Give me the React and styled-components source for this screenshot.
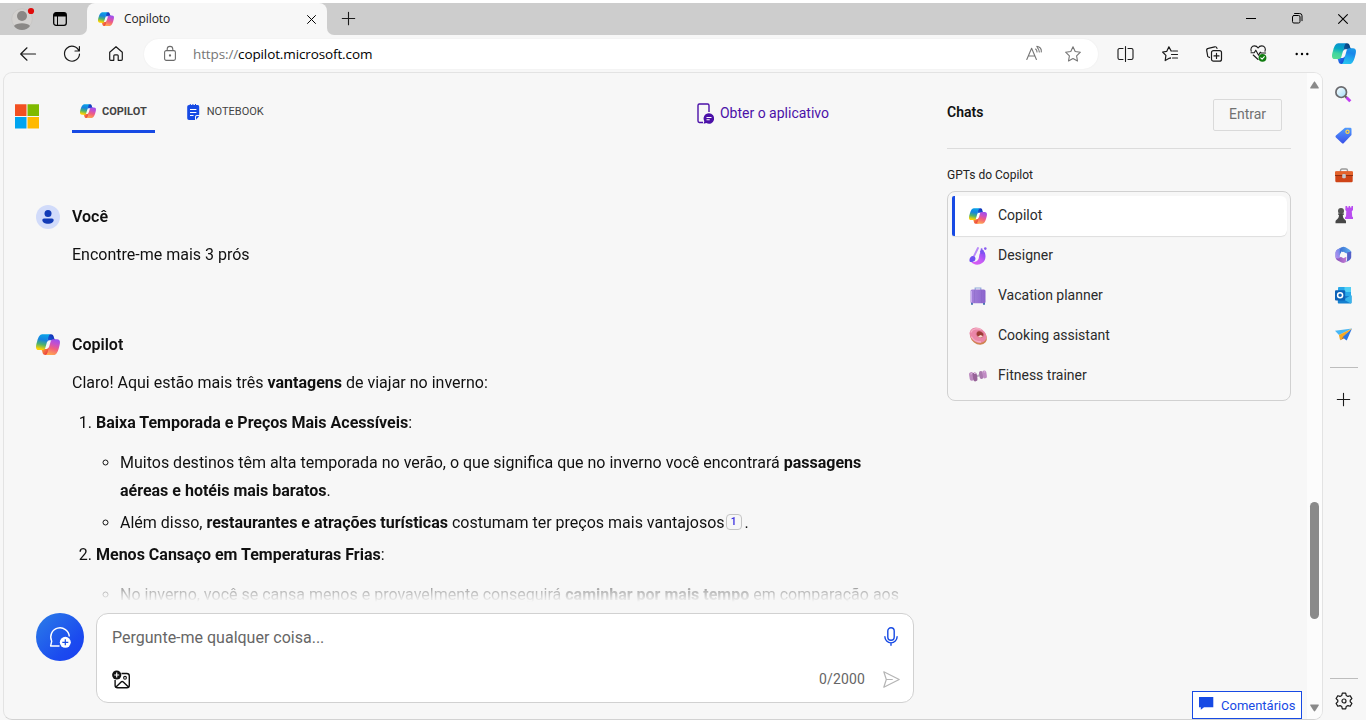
import React, { useId } from "react";
import styled, { createGlobalStyle, css } from "styled-components";

const GlobalStyle = createGlobalStyle`
  *, *::before, *::after { box-sizing: border-box; }
  body { margin: 0; background: #f7f7f7; color: #111; font-family: Roboto, "Liberation Sans", sans-serif; overflow: hidden; }
  button { font: inherit; margin: 0; padding: 0; border: 0; background: none; color: inherit; }
  svg { display: block; flex: none; overflow: visible; }
`;

/* ---------- icons ---------- */

const Line = ({ w = 20, h, box, stroke = "#1b1b1b", sw = 1, children }) => (
  <svg width={w} height={h || w} viewBox={box || `0 0 ${w} ${h || w}`} fill="none" stroke={stroke} strokeWidth={sw} strokeLinecap="round" strokeLinejoin="round">
    {children}
  </svg>
);

const logoThemes = {
  color: {
    left: ["#0aa4e8", "#1583e0", "#4fb36c", "#ffd400"],
    right: ["#9a50f0", "#c850c8", "#f2607c", "#ffa84f"],
    top: ["#1e63e0", "#0f33b8"],
    bottom: ["#f8a13c", "#ee3f3f"],
  },
  blue: {
    left: ["#0a8fd0", "#05a8c4", "#3fd4a0", "#55dc94"],
    right: ["#1b9ae8", "#1a86ea", "#1fa6ee", "#28c4f0"],
    top: ["#0f5fa8", "#07407c"],
    bottom: ["#2c7cf0", "#1550d8"],
  },
};

function CopilotLogo({ width = 24, theme = "color" }) {
  const id = useId().replace(/[^a-zA-Z0-9]/g, "");
  const t = logoThemes[theme];
  return (
    <svg width={width} height={(width * 39) / 44} viewBox="2 4.5 44 39">
      <defs>
        <linearGradient id={`${id}l`} x1="17" y1="5" x2="11" y2="34" gradientUnits="userSpaceOnUse">
          <stop offset="0" stopColor={t.left[0]} />
          <stop offset=".35" stopColor={t.left[1]} />
          <stop offset=".65" stopColor={t.left[2]} />
          <stop offset=".95" stopColor={t.left[3]} />
        </linearGradient>
        <linearGradient id={`${id}r`} x1="38" y1="14" x2="29" y2="43" gradientUnits="userSpaceOnUse">
          <stop offset="0" stopColor={t.right[0]} />
          <stop offset=".3" stopColor={t.right[1]} />
          <stop offset=".6" stopColor={t.right[2]} />
          <stop offset="1" stopColor={t.right[3]} />
        </linearGradient>
        <linearGradient id={`${id}t`} x1="24" y1="18" x2="33" y2="7" gradientUnits="userSpaceOnUse">
          <stop offset="0" stopColor={t.top[0]} />
          <stop offset="1" stopColor={t.top[1]} />
        </linearGradient>
        <linearGradient id={`${id}b`} x1="13" y1="32" x2="22" y2="40" gradientUnits="userSpaceOnUse">
          <stop offset="0" stopColor={t.bottom[0]} />
          <stop offset="1" stopColor={t.bottom[1]} />
        </linearGradient>
      </defs>
      <path fill={`url(#${id}t)`} d="M34.142 8.325A4.63 4.63 0 0 0 29.7 5h-1.35a4.63 4.63 0 0 0-4.554 3.794L21.48 21.407l.575-1.965a4.63 4.63 0 0 1 4.443-3.33h7.853l3.294 1.282 3.175-1.283h-.926a4.63 4.63 0 0 1-4.443-3.325z" />
      <path fill={`url(#${id}b)`} d="M14.33 39.656A4.63 4.63 0 0 0 18.779 43h2.87a4.63 4.63 0 0 0 4.629-4.51l.312-12.163-.654 2.233a4.63 4.63 0 0 1-4.443 3.329h-7.919l-2.823-1.531-3.057 1.53h.912a4.63 4.63 0 0 1 4.447 3.344z" />
      <path fill={`url(#${id}l)`} d="M29.5 5H13.46c-4.583 0-7.332 6.057-9.165 12.113-2.172 7.176-5.014 16.775 3.207 16.775h6.925a4.63 4.63 0 0 0 4.463-3.358L24.494 11.126C25.443 8.2 26.4 5 29.5 5z" />
      <path fill={`url(#${id}r)`} d="M18.498 43h16.04c4.583 0 7.332-6.058 9.165-12.115 2.172-7.177 5.015-16.779-3.207-16.779H33.57a4.63 4.63 0 0 0-4.463 3.359l-5.603 19.409C22.555 39.8 21.6 43 18.498 43z" />
    </svg>
  );
}

const ProfileIcon = () => (
  <svg width="22" height="24" viewBox="0 0 22 24">
    <circle cx="11" cy="12" r="10.300" fill="#d3d1cf" stroke="#c3c1bf" strokeWidth=".6" />
    <circle cx="11" cy="9" r="5" fill="#8a8886" />
    <path d="M3 19c2-3.600 14-3.600 16 0-1.800 2.600-4.800 4-8 4s-6.200-1.400-8-4z" fill="#8a8886" />
    <circle cx="20" cy="4" r="3.100" fill="#e00b0b" />
  </svg>
);

const TabActionsIcon = () => (
  <svg width="14" height="14" viewBox="0 0 14 14">
    <rect x=".7" y=".7" width="12.600" height="12.600" rx="2.300" fill="none" stroke="#000" strokeWidth="1.300" />
    <path d="M.8 4.500V3A2.200 2.200 0 0 1 3 .8h8A2.200 2.200 0 0 1 13.200 3v1.500z" fill="#000" />
    <path d="M4.500 4v9" stroke="#000" strokeWidth="1" />
  </svg>
);

const BackIcon = () => <Line w={16} h={14} sw={1.2}><path d="M15.500 7H.8M7 .8.700 7 7 13.200" /></Line>;
const RefreshIcon = () => <Line w={16} sw={1.2}><path d="M15 5A7.500 7.500 0 1 0 15.500 8M15.400.6V5H11" /></Line>;
const HomeIcon = () => <Line w={14} h={15} sw={1.2}><path d="M.7 6.200 7 .700l6.300 5.500v7.100a1 1 0 0 1-1 1H9.200V9.800a1 1 0 0 0-1-1H5.800a1 1 0 0 0-1 1v4.500H1.700a1 1 0 0 1-1-1z" /></Line>;
const LockIcon = () => (
  <Line w={12} h={15} stroke="#6b6b6b" sw={1.1}>
    <rect x=".6" y="4.600" width="10.800" height="9.800" rx="1.600" />
    <path d="M3.200 4.500V3.200a2.800 2.800 0 0 1 5.600 0v1.300" />
    <circle cx="6" cy="9.500" r=".6" fill="#555" />
  </Line>
);
const ReadAloudIcon = () => (
  <Line w={16} h={15} stroke="#767676" sw={1.1}>
    <path d="M.8 13.500 5.600 2.200l4.800 11.300M2.300 10h6.500M9.600 3c.9.700 1.400 1.800 1.400 3M11.300 1.600c1.300 1.100 2 2.600 2 4.400M10.800.4C14 .9 15.600 3.200 15.300 6" />
  </Line>
);
const StarIcon = () => (
  <Line w={16} stroke="#767676" sw={1.1}>
    <path d="m8 .8 2.200 4.700 5.200.7-3.800 3.600.9 5.200L8 12.500 3.500 15l.9-5.200L.6 6.200l5.200-.7z" />
  </Line>
);
const SplitIcon = () => <Line w={17} h={16} sw={1.1}><path d="M7.500 .5v15M5 2.500H1.600A1.600 1.600 0 0 0 0 4.100v7.800a1.600 1.600 0 0 0 1.600 1.600H5M10 2.500h3.400A1.600 1.600 0 0 1 15 4.100v7.800a1.600 1.600 0 0 1-1.600 1.600H10" /></Line>;
const FavoritesIcon = () => (
  <Line w={16} sw={1.2}>
    <path d="M9 4.800 6.900.8 4.800 5.300.6 6l3.300 3.400-.7 5.200 4-2.300M11 5h4.500M9.500 8.500h6M10.500 12h5M9 4.800l1 .2M8.200 11.500v1" />
  </Line>
);
const CollectionsIcon = () => (
  <Line w={16} sw={1.2}>
    <rect x="5.500" y="4.600" width="10" height="10.600" rx="2" />
    <path d="M10.500 7.400v5M8 9.900h5M3.500 11.400 2.600 11A2 2 0 0 1 1.500 8.800L.7 4.600A2 2 0 0 1 2.300 2.300L8.700.8A2 2 0 0 1 11 2.300" />
  </Line>
);
const EssentialsIcon = () => (
  <Line w={17} h={17} sw={1.1}>
    <path d="M1.200 6.200C.2 3.500 1.800.9 4.400.9c1.700 0 2.900.8 3.700 2.100C8.900 1.700 10.100.9 11.800.9c2.700 0 4.300 2.600 3.200 5.300M1 7.800h3.200l1.600-2.600 2.800 5 1.600-3 1 .8h4.400M3.200 10l4.900 4.500" />
    <circle cx="12.500" cy="12.800" r="3.900" fill="#107c10" stroke="none" />
    <path d="m10.800 12.900 1.300 1.200 2.200-2.400" stroke="#fff" />
  </Line>
);
const MoreIcon = () => <svg width="14" height="4" viewBox="0 0 14 4"><circle cx="1.700" cy="2" r="1.200" /><circle cx="7" cy="2" r="1.200" /><circle cx="12.300" cy="2" r="1.200" /></svg>;
const CrossIcon = ({ size = 10 }) => <Line w={size} box="0 0 10 10" stroke="#000" sw={1.1}><path d="m.6.600 8.800 8.800M9.400.600.600 9.400" /></Line>;
const PlusIcon = ({ size = 13 }) => <Line w={size} box="0 0 13 13" sw={1.1}><path d="M6.500 .3v12.400M.3 6.500h12.400" /></Line>;
const MinimizeIcon = () => <svg width="10" height="1"><path d="M0 .500h10" stroke="#000" /></svg>;
const RestoreIcon = () => (
  <Line w={11} stroke="#000" sw={1}>
    <rect x=".5" y="2.500" width="7.500" height="7.500" rx="1.400" />
    <path d="M2.600.500H7.700a2.300 2.300 0 0 1 2.300 2.300v4.900" />
  </Line>
);

const MicrosoftLogo = () => (
  <svg width="24" height="25" viewBox="0 0 24 25">
    <path fill="#f25022" d="M0 .300h11.500v11.700H0z" /><path fill="#7fba00" d="M12.500 .300H24v11.700H12.500z" />
    <path fill="#00a4ef" d="M0 13h11.500v11.500H0z" /><path fill="#ffb900" d="M12.500 13H24v11.500H12.500z" />
  </svg>
);

const NotebookIcon = () => (
  <svg width="13" height="16" viewBox="0 0 13 16">
    <path fill="#174ae4" d="M2 1h.8V0h1v1h1.600V0h1v1H8V0h1v1h1.300A1.700 1.700 0 0 1 12.200 2.800V11H9.700A1.700 1.700 0 0 0 8 12.700V16H2A1.800 1.800 0 0 1 .2 14.200V2.800A1.800 1.800 0 0 1 2 1z" />
    <path fill="#174ae4" d="M9 15.800V13a1 1 0 0 1 1-1h2.200z" />
    <path d="M3 5.500h6.400M3 8.500h6.400M3 11.500h3.500" stroke="#fff" />
  </svg>
);

const PhoneChatIcon = () => (
  <svg width="18" height="21" viewBox="0 0 18 21">
    <path d="M6 19.500H2.400A1.400 1.400 0 0 1 1 18.100V2.400A1.400 1.400 0 0 1 2.400 1h8.200A1.400 1.400 0 0 1 12 2.400V9" fill="none" stroke="#4b11a8" strokeWidth="1.400" />
    <path d="M11.800 10.200a5.300 5.300 0 1 1-2.500 9.900l-2.700.600.700-2.500a5.300 5.300 0 0 1 4.500-8z" fill="#4b11a8" />
    <path d="M9.500 14.500h5M9.500 16.800h3.200" stroke="#fff" strokeWidth="1.100" />
  </svg>
);

const UserIcon = () => (
  <svg width="24" height="24" viewBox="0 0 24 24">
    <circle cx="12" cy="12" r="12" fill="#d1dbfa" />
    <circle cx="12" cy="8.500" r="3.500" fill="#123bb6" />
    <path d="M8 13.400h8a1.700 1.700 0 0 1 1.700 1.700c0 2.300-2.600 3.700-5.700 3.700s-5.700-1.400-5.700-3.700A1.700 1.700 0 0 1 8 13.400z" fill="#123bb6" />
  </svg>
);

const NewTopicIcon = () => (
  <svg width="22" height="22" viewBox="0 0 22 22" fill="none">
    <path d="M10.500 20H1.600l1.100-4.700A9.300 9.300 0 1 1 20.300 10.500" stroke="#fff" strokeWidth="1.400" strokeLinejoin="round" />
    <circle cx="16.300" cy="16.300" r="5.500" fill="#fff" />
    <path d="M16.300 13.300v6M13.300 16.300h6" stroke="#174ae4" strokeWidth="1.200" />
  </svg>
);

const AddImageIcon = () => (
  <svg width="19" height="19" viewBox="0 0 19 19" fill="none" stroke="#111">
    <path d="M9.500 3.500h5.300a2.500 2.500 0 0 1 2.500 2.500v9.300a2.500 2.500 0 0 1-2.500 2.500H5.600a2.500 2.500 0 0 1-2.500-2.500V10M4 17l5.100-5a1.600 1.600 0 0 1 2.200 0l5.200 5" strokeWidth="1.400" />
    <circle cx="13" cy="7.800" r="1.400" strokeWidth="1.100" />
    <circle cx="4.700" cy="5" r="4.600" fill="#111" stroke="none" />
    <path d="M4.700 2.500v5M2.200 5h5" stroke="#fff" strokeWidth="1.200" />
  </svg>
);

const MicIcon = () => (
  <Line w={14} h={19} stroke="#174ae4" sw={1.4}>
    <rect x="3.800" y=".8" width="6.400" height="12.400" rx="3.200" />
    <path d="M.9 9.800a6.100 6.100 0 0 0 12.200 0M7 16v2.300" />
  </Line>
);

const SendIcon = () => (
  <Line w={17} h={17} stroke="#b5b5b5" sw={1.2}>
    <path d="M.8.800 16.200 8.500.800 16.200l2.500-7.700zM3.300 8.500h6" />
  </Line>
);

const CommentIcon = () => <svg width="15" height="13" viewBox="0 0 15 13"><path d="M0 0h14.300v10.200H5L1.800 12.800v-2.600H0z" fill="#174ae4" /></svg>;

const GearIcon = () => (
  <Line w={18} sw={1.2}>
    <path d="M7.300 1.100h3.400l.5 2.300 1.800 1 2.200-.7 1.700 2.900-1.700 1.600v1.600l1.700 1.600-1.700 2.900-2.200-.7-1.800 1-.5 2.300H7.300l-.5-2.300-1.800-1-2.200.700-1.700-2.900 1.700-1.600V8.200L1.100 6.600l1.700-2.900 2.200.7 1.800-1z" />
    <circle cx="9" cy="9" r="2" />
  </Line>
);

const SearchEmoji = () => (
  <svg width="17" height="18" viewBox="0 0 17 18">
    <defs>
      <linearGradient id="lens" x1="0" y1="0" x2="1" y2="1"><stop stopColor="#fff" /><stop offset="1" stopColor="#9fdcf8" /></linearGradient>
    </defs>
    <path d="m9.800 10 2 1.800" stroke="#555" strokeWidth="2" />
    <path d="m11.500 11.500 3.800 3.700" stroke="#c13df2" strokeWidth="3" />
    <circle cx="6.200" cy="6.200" r="5.300" fill="url(#lens)" stroke="#6a6a6e" strokeWidth="1.700" />
  </svg>
);

const TagIcon = () => (
  <svg width="17" height="17" viewBox="0 0 17 17">
    <defs><linearGradient id="tag" x1="0" y1="0" x2="0" y2="1"><stop stopColor="#4f9bff" /><stop offset="1" stopColor="#3b52e8" /></linearGradient></defs>
    <path d="M10 .8h5.200A1.300 1.300 0 0 1 16.500 2.100v6L8.900 16a1.500 1.500 0 0 1-2.100 0L.900 10.500a1.500 1.500 0 0 1 0-2.100z" fill="url(#tag)" />
    <circle cx="12.500" cy="4.800" r="1.600" fill="#4c7ee8" stroke="#ffd24a" strokeWidth="1.300" />
  </svg>
);

const ToolboxIcon = () => (
  <svg width="18" height="15" viewBox="0 0 18 15">
    <path d="M5.500 4V2.600C5.500 1.600 6.100 1 7 1h4c.9 0 1.500.6 1.500 1.600V4" fill="none" stroke="#9b9b9b" strokeWidth="1.400" />
    <rect x=".3" y="3.600" width="17.400" height="10.600" rx="1.200" fill="#cf4417" />
    <path d="M0 4.500c0-.8.500-1.200 1.200-1.200h15.600c.7 0 1.200.4 1.200 1.200v2.700H0z" fill="#e4632c" />
    <path d="M0 7h18v.9H0z" fill="#8a2b10" />
    <rect x="7.200" y="6" width="3.600" height="4.200" rx="1" fill="#c4c7cc" />
  </svg>
);

const GamesIcon = () => (
  <svg width="18" height="18" viewBox="0 0 18 18">
    <path d="M10.500 0h1.700v1.500h1.400V0h1.500v1.500h1.300V0H18v4l-1.200 1.300.4 5.100.8.800V13h-8v-1.800l1-.8.3-5.100L10.300 4z" fill="#b94df0" />
    <circle cx="6" cy="5" r="3" fill="#555" />
    <path d="M3 7.500h6v1.300H7.800c0 2.200.6 3.900 2.200 5 .8.500 1 1 1 1.700v1.800H.500v-1.800c0-.7.400-1.200 1.100-1.700 1.600-1.100 2.400-2.800 2.400-5H3z" fill="#474747" />
  </svg>
);

const M365Icon = () => (
  <svg width="17" height="18" viewBox="0 0 17 17">
    <defs>
      <linearGradient id="mTop"><stop stopColor="#2d56c4" /><stop offset="1" stopColor="#62b4f4" /></linearGradient>
      <linearGradient id="mLeft" x1="0" y1="1" x2="1" y2="0"><stop stopColor="#c08cf0" /><stop offset="1" stopColor="#5a8de8" /></linearGradient>
      <linearGradient id="mLow"><stop stopColor="#8150b8" /><stop offset="1" stopColor="#c27ad4" /></linearGradient>
    </defs>
    <path d="M6.600.8a3.800 3.800 0 0 1 3.900 0l3.800 2.200c1.200.7 2 2 2 3.300l-5.600.8-4.200-2L4.800 8.500.600 11V6.500c0-1.400.8-2.700 2-3.400z" fill="url(#mTop)" />
    <path d="M.600 6.300c0-1.400.7-2.600 1.900-3.300L6.300.9c-1 1-1.500 2.200-1.500 3.700v6.600L2 13c-.9-.8-1.400-1.600-1.400-2.800z" fill="url(#mLeft)" />
    <path d="M.600 10.500c.3 1.200 1.300 2 2.500 1.400l5.800-3.300 2.500 2-.5 5-.9.500a3.800 3.800 0 0 1-3.500 0l-3.800-2.200C1.400 13.200.500 11.900.600 10.500z" fill="url(#mLow)" />
    <path d="M10.500 16.100c1.100-1 1.600-2.200 1.600-3.700V6L16.200 5v5.600c0 1.300-.7 2.500-1.800 3.200z" fill="#5560c8" />
    <path d="m8.500 5.300 2.800 1.600v3.300l-2.800 1.600-2.800-1.600V6.900z" fill="#f7f7f7" />
  </svg>
);

const OutlookIcon = () => (
  <svg width="17" height="17" viewBox="0 0 17 17">
    <path d="M3 1.200C3 .5 3.500 0 4.200 0h10.600c.7 0 1.200.5 1.200 1.200V9H3z" fill="#28a8ea" />
    <path d="M9.500 0h5.300c.7 0 1.200.5 1.200 1.200V5H9.500z" fill="#50d0f5" />
    <path d="M2.800 9h13.700v6.500c0 .6-.4 1-1 1H3.800c-.6 0-1-.4-1-1z" fill="#1580d0" />
    <path d="m16.500 8-7.800 4.500 7.100 4c.4-.2.700-.6.700-1z" fill="#37b5ec" />
    <rect y="3.200" width="10.200" height="10.200" rx="1" fill="#0c62b8" />
    <circle cx="5.100" cy="8.300" r="2.500" fill="none" stroke="#fff" strokeWidth="1.500" />
  </svg>
);

const DropIcon = () => (
  <svg width="17" height="14" viewBox="0 0 17 14">
    <path d="M0 2.800 17 .500 4 7z" fill="#47b7f5" />
    <path d="M17 .500 11.700 12.400 7 9z" fill="#2b76e5" />
    <path d="M17 .500 3.900 7l1.200 5.200L7.700 9z" fill="#f7a823" />
    <path d="m5.100 12.200 2.600-3.200 1.600 1.200z" fill="#c87618" />
  </svg>
);

const DesignerIcon = () => (
  <svg width="18" height="18" viewBox="0 0 18 18">
    <defs><linearGradient id="dsg" x1="1" y1="0" x2="0" y2="1"><stop stopColor="#7a4cf5" /><stop offset=".5" stopColor="#c65cf5" /><stop offset="1" stopColor="#e05cf2" /></linearGradient></defs>
    <path d="M11.500 5.500 15.500 5c2 4.500.8 8.500-2 10.800-3.600 2.900-9.300 2.200-11.500-1 3.500.8 6.500-.2 7.500-2.800.8-2.200.4-4.500 2-6.500z" fill="url(#dsg)" />
    <path d="M9 1 4.300 10.500" stroke="#b98af8" strokeWidth="1.900" strokeLinecap="round" />
    <path d="M3.700 9c2.300.2 3.400 2 2.500 3.900C5.300 14.800 2.500 15.300.800 14.800c-.8-1.600-.3-5.200 2.900-5.800z" fill="#6f4ff2" />
    <circle cx="13" cy="4.800" r="2.100" fill="#7b55f0" /><circle cx="16.300" cy="1.600" r="1.300" fill="#8a5cf2" /><circle cx="12.600" cy="2.300" r="1" fill="#8a5cf2" />
  </svg>
);

const SuitcaseIcon = () => (
  <svg width="18" height="18" viewBox="0 0 18 18">
    <defs><linearGradient id="bag"><stop stopColor="#a583da" /><stop offset="1" stopColor="#8a63cc" /></linearGradient></defs>
    <path d="M6.200 3V1h5.600v2" fill="none" stroke="#8fa9da" strokeWidth="1.200" />
    <path d="M2 15h2v2.700H2zM14 15h2v2.700h-2z" fill="#3f77ad" />
    <rect x="1.500" y="2.500" width="15" height="13.800" rx="1.600" fill="url(#bag)" />
    <path d="M5.500 3v13M12.500 3v13" stroke="#7f5cc0" strokeWidth=".3" />
    <path d="M2.500 4v11" stroke="#c7aaf0" />
  </svg>
);

const DonutIcon = () => (
  <svg width="18" height="18" viewBox="0 0 18 18">
    <ellipse cx="9.500" cy="9.800" rx="9" ry="7.300" transform="rotate(38 9.500 9.800)" fill="#cf8450" />
    <ellipse cx="9" cy="8.200" rx="9" ry="7" transform="rotate(35 9 8.200)" fill="#ea86a8" />
    <path d="M1.800 5.500c1.800-4 7-4.600 10.500-2.700M2.200 9.500c2 3.500 5.300 5.500 9.800 5.500" stroke="#f4aec4" strokeWidth="1.300" fill="none" />
    <ellipse cx="11" cy="7.300" rx="4.300" ry="3.500" transform="rotate(30 11 7.300)" fill="#d9788e" />
    <ellipse cx="11" cy="7.300" rx="3.400" ry="2.700" transform="rotate(30 11 7.300)" fill="#9c3a34" />
    <path d="M9 9.600c1.500 1.500 4 1.200 4.800-.5L11.500 8z" fill="#f5d9cd" />
  </svg>
);

const DumbbellIcon = () => (
  <svg width="18" height="12" viewBox="0 0 18 12">
    <path d="m7 6.500 5-1.800" stroke="#b9aec0" strokeWidth="2" />
    <rect x=".3" y="2.200" width="4.300" height="8.600" rx="2" transform="rotate(-9 2 6)" fill="#bb88be" />
    <rect x="3.800" y="2.400" width="4.200" height="9" rx="2" transform="rotate(-9 6 6)" fill="#976398" />
    <rect x="10.300" y="1" width="3.800" height="8" rx="1.900" transform="rotate(-9 12 5)" fill="#a979ad" />
    <rect x="13.700" y=".500" width="4" height="8" rx="1.900" transform="rotate(-9 15 5)" fill="#c08bc3" />
    <path d="m1.500 4 1.600-.300M5 3.500l1.800-.200M14.800 2l1.500-.200" stroke="#e3bde5" strokeWidth="1" />
  </svg>
);

const ArrowIcon = ({ down }) => (
  <svg width="9" height="8" viewBox="0 0 9 8">
    <path d={down ? "M.9.500h7.200c.7 0 .9.600.600 1.100L5.200 7c-.4.600-1 .6-1.400 0L.300 1.600C0 1.100.200.500.900.500z" : "M.9 7.500h7.200c.7 0 .9-.6.600-1.100L5.200 1c-.4-.6-1-.6-1.400 0L.300 6.400C0 6.900.200 7.500.900 7.500z"} fill="#8a8a8a" />
  </svg>
);

/* ---------- browser frame ---------- */

const Browser = styled.div`
  width: 1366px;
  height: 720px;
  display: flex;
  flex-direction: column;
  background: #f7f7f7;
`;

const TabStrip = styled.header`
  height: 35px;
  display: flex;
  border-top: 3px solid #fff;
  background: #cdcdcd;
`;

const StripStart = styled.div`
  width: 87px;
  padding: 4px 0 0 11px;
  display: flex;
  align-items: flex-start;
  gap: 20px;
  background: #cdcdcd;
  border-bottom-right-radius: 7px;
  & > :last-child { margin-top: 5px; }
`;

const TabBackdrop = styled.div`
  display: flex;
  background: #f7f7f7;
  box-shadow: inset 0 8px #cdcdcd;
  ${(p) => p.$grow && css`flex: 1; box-shadow: none;`}
`;

const Tab = styled.div`
  width: 240px;
  padding: 0 11px;
  display: flex;
  align-items: center;
  background: #f7f7f7;
  border-radius: 8px 8px 0 0;
`;

const TabTitle = styled.span`
  flex: 1;
  margin-left: 10px;
  font: 12px/16px "Open Sans", sans-serif;
  letter-spacing: -0.1px;
  color: #1b1b1b;
`;

const StripEnd = styled.div`
  flex: 1;
  display: flex;
  align-items: center;
  justify-content: space-between;
  padding: 0 0 1px 15px;
  background: #cdcdcd;
  border-bottom-left-radius: 7px;
`;

const WindowControls = styled.div`
  display: flex;
`;

const WindowButton = styled.button`
  width: 46px;
  height: 31px;
  display: grid;
  place-items: center;
`;

const Toolbar = styled.nav`
  height: 37px;
  display: flex;
  align-items: center;
  padding-left: 6px;
`;

const ToolButton = styled.button`
  width: ${(p) => p.$w || 44}px;
  height: 30px;
  display: grid;
  place-items: center;
`;

const AddressBar = styled.div`
  width: 954px;
  height: 30px;
  margin: 0 6px;
  padding: 0 17px 0 20px;
  display: flex;
  align-items: center;
  background: #fff;
  border-radius: 15px;
  box-shadow: 0 0 2px rgba(0, 0, 0, 0.06);
`;

const Url = styled.span`
  flex: 1;
  margin-left: 17px;
  font: 13.5px/20px "Open Sans", sans-serif;
  letter-spacing: -0.12px;
  color: #000;
  span { color: #767676; }
`;

const AddressActions = styled.div`
  display: flex;
  align-items: center;
  gap: 23px;
`;

const Workspace = styled.div`
  flex: 1;
  min-height: 0;
  display: flex;
  padding: 0 0 0 3px;
`;

const Rail = styled.aside`
  width: 43px;
  padding: 3px 2px 0 0;
  display: flex;
  flex-direction: column;
  align-items: center;
`;

const RailItem = styled.button`
  width: 40px;
  height: ${(p) => p.$h || 40}px;
  display: grid;
  place-items: center;
`;

const RailRule = styled.hr`
  width: 28px;
  height: 1px;
  border: 0;
  background: #bdbdbd;
  margin: ${(p) => p.$m};
`;

/* ---------- page ---------- */

const Page = styled.main`
  position: relative;
  width: 1320px;
  height: 648px;
  display: flex;
  border: 1px solid #e3e3e3;
  border-bottom-color: #d2d2d2;
  border-radius: 9px;
  overflow: hidden;
  background: #f7f7f7;
`;

const MainColumn = styled.section`
  width: 943px;
  display: flex;
  flex-direction: column;
`;

const PageHeader = styled.div`
  height: 80px;
  padding: 31px 0 0 11px;
  display: flex;
  align-items: flex-start;
`;

const PageTabs = styled.div`
  display: flex;
  gap: 24px;
  margin: -11px 0 0 33px;
`;

const PageTab = styled.button`
  height: 40px;
  padding: 0 8px;
  display: flex;
  align-items: center;
  gap: ${(p) => (p.$active ? 6 : 7)}px;
  font-size: 11px;
  line-height: 16px;
  color: #444;
  font-weight: ${(p) => (p.$active ? 700 : 400)};
  border-bottom: 3px solid ${(p) => (p.$active ? "#174ae4" : "transparent")};
`;

const AppLink = styled.a`
  display: flex;
  align-items: center;
  gap: 5px;
  height: 21px;
  margin: -2px 118px 0 auto;
  font-size: 14px;
  color: #4b11a8;
  svg { margin-top: 1px; }
`;

/* The mask fades the last visible line out above the composer. */
const Conversation = styled.div`
  height: 460px;
  width: 900px;
  padding: 52px 0 0 32px;
  overflow: hidden;
  font-size: 16px;
  line-height: 28px;
  mask-image: linear-gradient(#000 411px, transparent 449px);
`;

const Message = styled.article`
  & + & { margin-top: 64px; }
`;

const Author = styled.div`
  height: 24px;
  display: flex;
  align-items: center;
  gap: 12px;
  line-height: 24px;
  font-weight: 600;
`;

const MessageBody = styled.div`
  margin: 12px 0 0 36px;
  white-space: nowrap;
  p { margin: 0; }
  strong { font-weight: 700; }
`;

const Points = styled.ol`
  margin: 12px 0 0;
  padding-left: 24px;
  & > li + li { margin-top: 4px; }
`;

const SubPoints = styled.ul`
  margin: 12px 0 0;
  padding-left: 24px;
  list-style: circle;
  & > li + li { margin-top: 4px; }
`;

const Citation = styled.sup`
  display: inline-block;
  width: 16px;
  height: 16px;
  margin: 0 3px 0 1px;
  border: 1px solid #c4c4c4;
  border-radius: 4px;
  font-size: 10px;
  font-weight: 600;
  line-height: 14px;
  text-align: center;
  vertical-align: 3px;
  color: #3b2fe0;
`;

const Composer = styled.div`
  padding-left: 32px;
  display: flex;
  gap: 12px;
`;

const NewTopicButton = styled.button`
  width: 48px;
  height: 48px;
  border-radius: 50%;
  display: grid;
  place-items: center;
  background: linear-gradient(135deg, #2a7ae8 5%, #1b4aef 70%, #1a3ff0);
`;

const InputCard = styled.div`
  width: 818px;
  height: 90px;
  padding: 11px 13px 11px 15px;
  display: flex;
  flex-direction: column;
  justify-content: space-between;
  background: #fff;
  border: 1px solid #d1d1d1;
  border-radius: 12px;
`;

const InputRow = styled.div`
  height: 24px;
  display: flex;
  align-items: center;
  justify-content: space-between;
  font-size: 16px;
  color: #666;
`;

const IconSlot = styled.span`
  width: 18px;
  display: grid;
  place-items: center;
  padding-bottom: ${(p) => p.$lift || 0}px;
`;

const SendGroup = styled.div`
  display: flex;
  align-items: center;
  gap: 17px;
  font-size: 14px;
  letter-spacing: 0.15px;
`;

const SideColumn = styled.section`
  width: 344px;
  margin-right: 16px;
  padding-top: 26px;
`;

const SideHeader = styled.div`
  height: 50px;
  padding-right: 9px;
  display: flex;
  justify-content: space-between;
  border-bottom: 1px solid #dcdcdc;
  h2 { margin: 3px 0 0; font-size: 14px; line-height: 20px; font-weight: 600; color: #111; }
`;

const SignInButton = styled.button`
  width: 69px;
  height: 32px;
  padding-bottom: 2px;
  border: 1px solid #dadada;
  border-radius: 2px;
  font-size: 14px;
  color: #717171;
`;

const SideLabel = styled.h3`
  margin: 18px 0 8px;
  font-size: 12px;
  line-height: 16px;
  font-weight: 400;
  color: #222;
`;

const GptList = styled.div`
  padding: 4px 3px 4px 4px;
  border: 1px solid #d1d1d1;
  border-radius: 8px;
`;

const GptItem = styled.div`
  height: 40px;
  padding: 0 0 2px 14px;
  display: flex;
  align-items: center;
  gap: 11px;
  font-size: 14px;
  color: #2b2b2b;
  border-left: 3px solid transparent;
  border-radius: 2px 6px 6px 2px;
  & > :first-child { margin-top: 2px; }
  ${(p) => p.$active && css`
    background: #fff;
    border-left-color: #174ae4;
    box-shadow: 0 1px 1px rgba(0, 0, 0, 0.1);
  `}
`;

const ScrollTrack = styled.div`
  width: 15px;
  padding: 8px 0 7px;
  display: flex;
  flex-direction: column;
  align-items: center;
  background: #fcfcfc;
`;

const ScrollThumb = styled.div`
  width: 9px;
  height: 117px;
  margin: 413px 0 auto;
  border-radius: 5px;
  background: #8a8a8a;
`;

const FeedbackButton = styled.button`
  position: absolute;
  right: 20px;
  bottom: 0;
  width: 110px;
  height: 28px;
  padding-left: 6px;
  display: flex;
  align-items: center;
  gap: 7px;
  background: #fff;
  border: 1px solid #174ae4;
  font-size: 13px;
  color: #174ae4;
  svg { margin-top: -3px; }
`;

const gpts = [
  { name: "Copilot", icon: <CopilotLogo width={18} />, active: true },
  { name: "Designer", icon: <DesignerIcon /> },
  { name: "Vacation planner", icon: <SuitcaseIcon /> },
  { name: "Cooking assistant", icon: <DonutIcon /> },
  { name: "Fitness trainer", icon: <DumbbellIcon /> },
];

const railIcons = [SearchEmoji, TagIcon, ToolboxIcon, GamesIcon, M365Icon, OutlookIcon, DropIcon];
const toolIcons = [SplitIcon, FavoritesIcon, CollectionsIcon, EssentialsIcon, MoreIcon];

export default function App() {
  return (
    <Browser>
      <GlobalStyle />
      <TabStrip>
        <TabBackdrop>
          <StripStart><ProfileIcon /><TabActionsIcon /></StripStart>
        </TabBackdrop>
        <TabBackdrop>
          <Tab>
            <CopilotLogo width={16} />
            <TabTitle>Copiloto</TabTitle>
            <CrossIcon size={9} />
          </Tab>
        </TabBackdrop>
        <TabBackdrop $grow>
          <StripEnd>
            <PlusIcon />
            <WindowControls>
              <WindowButton><MinimizeIcon /></WindowButton>
              <WindowButton><RestoreIcon /></WindowButton>
              <WindowButton><CrossIcon size={10} /></WindowButton>
            </WindowControls>
          </StripEnd>
        </TabBackdrop>
      </TabStrip>

      <Toolbar>
        <ToolButton><BackIcon /></ToolButton>
        <ToolButton><RefreshIcon /></ToolButton>
        <ToolButton><HomeIcon /></ToolButton>
        <AddressBar>
          <LockIcon />
          <Url><span>https://</span>copilot.microsoft.com</Url>
          <AddressActions><ReadAloudIcon /><StarIcon /></AddressActions>
        </AddressBar>
        {toolIcons.map((Icon, i) => <ToolButton key={i}><Icon /></ToolButton>)}
        <ToolButton $w={40}><CopilotLogo width={24} theme="blue" /></ToolButton>
      </Toolbar>

      <Workspace>
        <Page>
          <MainColumn>
            <PageHeader>
              <MicrosoftLogo />
              <PageTabs>
                <PageTab $active><CopilotLogo width={16} />COPILOT</PageTab>
                <PageTab><NotebookIcon />NOTEBOOK</PageTab>
              </PageTabs>
              <AppLink><PhoneChatIcon />Obter o aplicativo</AppLink>
            </PageHeader>

            <Conversation>
              <Message>
                <Author><UserIcon />Você</Author>
                <MessageBody><p>Encontre-me mais 3 prós</p></MessageBody>
              </Message>
              <Message>
                <Author><CopilotLogo width={24} />Copilot</Author>
                <MessageBody>
                  <p>Claro! Aqui estão mais três <strong>vantagens</strong> de viajar no inverno:</p>
                  <Points>
                    <li>
                      <strong>Baixa Temporada e Preços Mais Acessíveis</strong>:
                      <SubPoints>
                        <li>
                          Muitos destinos têm alta temporada no verão, o que significa que no inverno você encontrará <strong>passagens<br />aéreas e hotéis mais baratos</strong>.
                        </li>
                        <li>
                          Além disso, <strong>restaurantes e atrações turísticas</strong> costumam ter preços mais vantajosos<Citation>1</Citation>.
                        </li>
                      </SubPoints>
                    </li>
                    <li>
                      <strong>Menos Cansaço em Temperaturas Frias</strong>:
                      <SubPoints>
                        <li>No inverno, você se cansa menos e provavelmente conseguirá <strong>caminhar por mais tempo</strong> em comparação aos</li>
                      </SubPoints>
                    </li>
                  </Points>
                </MessageBody>
              </Message>
            </Conversation>

            <Composer>
              <NewTopicButton><NewTopicIcon /></NewTopicButton>
              <InputCard>
                <InputRow>
                  <span>Pergunte-me qualquer coisa...</span>
                  <IconSlot $lift={2}><MicIcon /></IconSlot>
                </InputRow>
                <InputRow>
                  <AddImageIcon />
                  <SendGroup>0/2000<IconSlot><SendIcon /></IconSlot></SendGroup>
                </InputRow>
              </InputCard>
            </Composer>
          </MainColumn>

          <SideColumn>
            <SideHeader>
              <h2>Chats</h2>
              <SignInButton>Entrar</SignInButton>
            </SideHeader>
            <SideLabel>GPTs do Copilot</SideLabel>
            <GptList>
              {gpts.map((g) => (
                <GptItem key={g.name} $active={g.active}>{g.icon}<span>{g.name}</span></GptItem>
              ))}
            </GptList>
          </SideColumn>

          <ScrollTrack>
            <ArrowIcon />
            <ScrollThumb />
            <ArrowIcon down />
          </ScrollTrack>
          <FeedbackButton><CommentIcon />Comentários</FeedbackButton>
        </Page>

        <Rail>
          {railIcons.map((Icon, i) => <RailItem key={i}><Icon /></RailItem>)}
          <RailRule $m="12px 0 12px" />
          <RailItem $h={39}><PlusIcon size={13} /></RailItem>
          <RailRule $m="auto 0 3px" />
          <RailItem $h={38}><GearIcon /></RailItem>
        </Rail>
      </Workspace>
    </Browser>
  );
}
